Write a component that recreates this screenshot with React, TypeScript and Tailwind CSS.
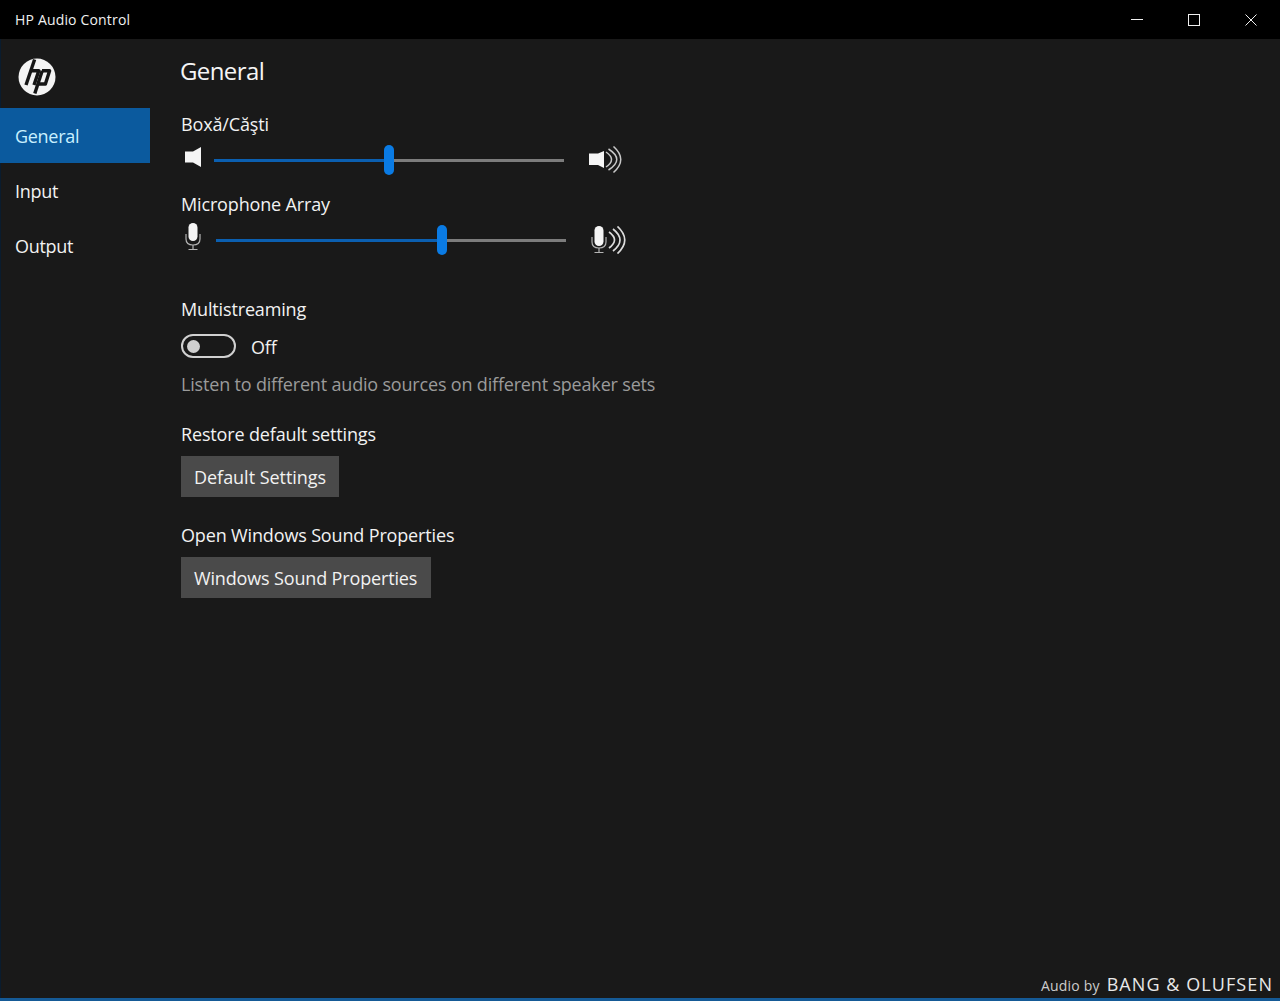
const font = "font-['Open_Sans','Noto_Sans',sans-serif]";

function HpLogo() {
  return (
    <svg width="38" height="38" viewBox="0 0 38 38">
      <circle cx="19" cy="19" r="18.5" fill="#f4f4f4" />
      <g stroke="#161616" strokeWidth="3.4" fill="none" strokeLinecap="butt" strokeLinejoin="round">
        <path d="M16.6 1.5 L8 27" />
        <path d="M13 12.7 H20.8 L16 27" />
        <path d="M24.2 12.7 L16.8 35.5" />
        <path d="M24 12.7 H31.6 L27.4 26 H19.5" />
      </g>
    </svg>
  );
}

function SpeakerLow() {
  return (
    <svg width="16" height="20" viewBox="0 0 16 20">
      <path d="M0 4.5 H8 L16 0 V20 L8 15.5 H0 Z" fill="#f5f5f5" />
    </svg>
  );
}

function SpeakerHigh() {
  return (
    <svg width="34" height="28" viewBox="0 0 34 28">
      <path d="M0 7.5 H9 L15 5 V22 L9 19 H0 Z" fill="#f5f5f5" />
      <g fill="none" stroke="#c8c8c8" strokeWidth="1.5">
        <path d="M17 6 Q28 13.5 17 21" />
        <path d="M19.5 3 Q36 13.5 19.5 24" />
        <path d="M24.5 0.5 Q39 13.5 24.5 26.5" />
      </g>
    </svg>
  );
}

function Mic({ waves }: { waves?: boolean }) {
  return (
    <svg width={waves ? 36 : 16} height="28" viewBox={waves ? "0 0 36 28" : "0 0 16 28"}>
      <rect x="3.5" y="0" width="9" height={waves ? 20 : 18} rx="4.5" fill="#f5f5f5" />
      <path d="M1 11 V16 Q1 22 8 22 Q15 22 15 16 V11" fill="none" stroke="#b4b4b4" strokeWidth="1.2" />
      <path d="M8 22 V26 M3.5 26.5 H12.5" fill="none" stroke="#b4b4b4" strokeWidth="1.2" />
      {waves && (
        <g fill="none" stroke="#dcdcdc" strokeWidth="1.7">
          <path d="M18 6 Q29 14 18 22" />
          <path d="M22 3 Q36 14 22 25" />
          <path d="M26.5 0.5 Q41 14 26.5 27.5" />
        </g>
      )}
    </svg>
  );
}

function Slider({ fill, rest }: { fill: string; rest: string }) {
  return (
    <div className="flex w-[350px] items-center h-[30px]">
      <div className={`${fill} h-[3px] bg-[#0b5fb0]`} />
      <div className="w-[10px] h-[30px] rounded-[5px] bg-[#0a7be4]" />
      <div className={`${rest} h-[3px] bg-[#7c7c7c]`} />
    </div>
  );
}

function Label({ children, className }: { children: string; className: string }) {
  return <div className={`h-[24px] leading-[24px] text-[18px] tracking-[-0.15px] text-[#f2f2f2] ${className}`}>{children}</div>;
}

function Btn({ children, className }: { children: string; className: string }) {
  return (
    <button className={`block self-start h-[41px] px-[13px] bg-[#4a4a4a] text-[18px] leading-[24px] whitespace-nowrap text-[#f2f2f2] text-left ${className}`}>
      {children}
    </button>
  );
}

export default function App() {
  return (
    <div className={`${font} h-[1001px] w-[1280px] flex flex-col bg-[#191919] overflow-hidden`}>
      <div className="h-[39px] shrink-0 bg-black flex items-center justify-between text-[#f0f0f0]">
        <span className="pl-[15px] text-[14px] tracking-[0.17px]">HP Audio Control</span>
        <div className="flex items-center pr-px">
          <div className="w-[57px] flex justify-center">
            <svg width="12" height="12" viewBox="0 0 12 12"><path d="M0 5.5 H12" stroke="#f0f0f0" strokeWidth="1" /></svg>
          </div>
          <div className="w-[57px] flex justify-center">
            <svg width="12" height="12" viewBox="0 0 12 12"><rect x="0.5" y="0.5" width="11" height="11" fill="none" stroke="#f0f0f0" strokeWidth="1" /></svg>
          </div>
          <div className="w-[57px] flex justify-center">
            <svg width="12" height="12" viewBox="0 0 12 12"><path d="M0.5 0.5 L11.5 11.5 M11.5 0.5 L0.5 11.5" stroke="#f0f0f0" strokeWidth="1" /></svg>
          </div>
        </div>
      </div>

      <div className="flex-1 flex min-h-0 border-l border-[#0a1c2e]">
        <nav className="w-[149px] shrink-0 flex flex-col">
          <div className="h-[69px] pl-[17px] pt-[19px]"><HpLogo /></div>
          <div className="h-[55px] -ml-px pl-[15px] pt-[2px] flex items-center bg-[#0b5a9e] text-[#c8f0ff] text-[18px] tracking-[-0.3px]">General</div>
          <div className="h-[55px] pl-[14px] pt-[2px] flex items-center text-[#f2f2f2] text-[18px] tracking-[-0.3px]">Input</div>
          <div className="h-[55px] pl-[14px] pt-[2px] flex items-center text-[#f2f2f2] text-[18px] tracking-[-0.3px]">Output</div>
        </nav>

        <main className="flex-1 flex flex-col pl-[31px]">
          <h1 className="mt-[16px] -ml-[1px] h-[32px] leading-[32px] text-[24px] tracking-[-0.6px] text-[#f5f5f5]">General</h1>

          <Label className="mt-[25px]">Boxă/Căşti</Label>
          <div className="mt-[9px] flex items-center">
            <div className="w-[33px] pl-[4px] -mt-[6px]"><SpeakerLow /></div>
            <Slider fill="w-[170px]" rest="w-[170px]" />
            <div className="ml-[25px]"><SpeakerHigh /></div>
          </div>

          <Label className="mt-[17px]">Microphone Array</Label>
          <div className="mt-[9px] flex items-center">
            <div className="w-[35px] pl-[4px] -mt-[6px]"><Mic /></div>
            <Slider fill="w-[221px]" rest="w-[119px]" />
            <div className="ml-[25px]"><Mic waves /></div>
          </div>

          <Label className="mt-[42px]">Multistreaming</Label>
          <div className="mt-[13px] h-[24px] flex items-center">
            <div className="w-[55px] h-[24px] rounded-full border-[2.5px] border-[#d0d0d0] flex items-center pl-[4px]">
              <div className="w-[13px] h-[13px] rounded-full bg-[#cfcfcf]" />
            </div>
            <span className="ml-[15px] pt-[2px] text-[18px] tracking-[-0.15px] text-[#f2f2f2]">Off</span>
          </div>
          <div className="mt-[14px] h-[24px] leading-[24px] text-[18px] tracking-[-0.18px] text-[#9b9b9b]">Listen to different audio sources on different speaker sets</div>

          <Label className="mt-[26px]">Restore default settings</Label>
          <Btn className="mt-[10px] w-[158px] tracking-[-0.03px]">Default Settings</Btn>

          <Label className="mt-[26px]">Open Windows Sound Properties</Label>
          <Btn className="mt-[10px] w-[250px] tracking-[-0.15px]">Windows Sound Properties</Btn>

          <div className="mt-auto pr-[7px] flex items-baseline justify-end text-[#e8e8e8]">
            <span className="text-[14px] tracking-[0.2px] text-[#cccccc]">Audio by</span>
            <span className="ml-[7px] text-[18px] font-medium tracking-[1.07px]">BANG &amp; OLUFSEN</span>
          </div>
        </main>
      </div>
      <div className="h-[3px] shrink-0 bg-[#155a96]" />
    </div>
  );
}
